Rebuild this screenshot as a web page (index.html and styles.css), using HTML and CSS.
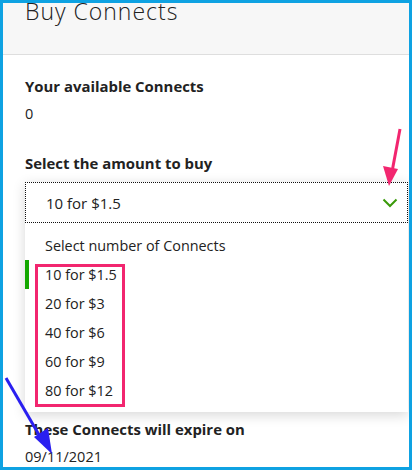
FILE: index.html
```html
<!DOCTYPE html>
<html>
<head>
<meta charset="utf-8">
<link rel="stylesheet" href="styles.css">
</head>
<body>
<div class="frame">
  <div class="header">
    <h1 class="title">Buy Connects</h1>
  </div>
  <div class="content">
    <div class="field">
      <div class="label">Your available Connects</div>
      <div class="value">0</div>
    </div>
    <div class="field field-select">
      <div class="label">Select the amount to buy</div>
      <div class="dropdown">
        <div class="select">
          <span>10 for $1.5</span>
          <svg class="chevron" width="16" height="10" viewBox="0 0 16 10"><path d="M1.5 1.5 L8 8 L14.5 1.5" fill="none" stroke="#3a9a0a" stroke-width="2"/></svg>
        </div>
        <ul class="menu">
          <li class="option">Select number of Connects</li>
          <li class="option selected">10 for $1.5</li>
          <li class="option">20 for $3</li>
          <li class="option">40 for $6</li>
          <li class="option">60 for $9</li>
          <li class="option">80 for $12</li>
        </ul>
      </div>
    </div>
    <div class="field field-expire">
      <div class="label">These Connects will expire on</div>
      <div class="value">09/11/2021</div>
    </div>
  </div>
  <div class="mark-box"></div>
  <svg class="arrows" width="412" height="470" viewBox="0 0 412 470">
    <line x1="400" y1="129" x2="392" y2="172" stroke="#f2266f" stroke-width="3"/>
    <polygon points="383,166 398,169 389,186" fill="#f2266f"/>
    <line x1="6" y1="378" x2="42" y2="440" stroke="#2a1ff0" stroke-width="3"/>
    <polygon points="34,437 48,428 52,454" fill="#2a1ff0"/>
  </svg>
</div>
</body>
</html>
```

FILE: styles.css
```css
* { box-sizing: border-box; }
html, body { margin: 0; padding: 0; background: #fff; }
body {
  font-family: "Open Sans", "Liberation Sans", sans-serif;
  color: #222;
}
.frame {
  position: relative;
  width: 412px;
  height: 470px;
  border: 3px solid #0ea2e2;
  overflow: hidden;
}
.header {
  height: 52px;
  background: #f7f7f7;
  border-bottom: 1px solid #dedede;
  padding: 0 0 0 22px;
}
.title {
  margin: 0;
  font-size: 23px;
  font-weight: 300;
  line-height: 16px;
  color: #222;
  letter-spacing: 1px;
}
.content {
  padding: 0 1px 0 22px;
}
.label {
  font-size: 14.9px;
  font-weight: 700;
  line-height: 20px;
}
.value {
  font-size: 14.5px;
  line-height: 20px;
  margin-top: 8px;
}
.field { padding-top: 21px; }
.field-select { padding-top: 29px; }
.field-expire { padding-top: 7px; }
.dropdown {
  margin-top: 9px;
  box-shadow: 0 3px 12px rgba(0,0,0,0.16);
}
.select {
  height: 41px;
  border: 1px dotted #111;
  display: flex;
  align-items: center;
  justify-content: space-between;
  padding: 0 9px 0 20px;
  font-size: 15px;
}
.chevron { display: block; }
.menu {
  list-style: none;
  margin: 0;
  padding: 8px 0 7px;
  background: #fff;
}
.option {
  height: 29px;
  line-height: 29px;
  font-size: 14.4px;
  border-left: 4px solid transparent;
  padding-left: 16px;
}
.option.selected { border-left-color: #14a800; }
.mark-box {
  position: absolute;
  left: 32px;
  top: 261px;
  width: 90px;
  height: 143px;
  border: 3px solid #f2266f;
}
.arrows {
  position: absolute;
  left: -3px;
  top: -3px;
}
```
